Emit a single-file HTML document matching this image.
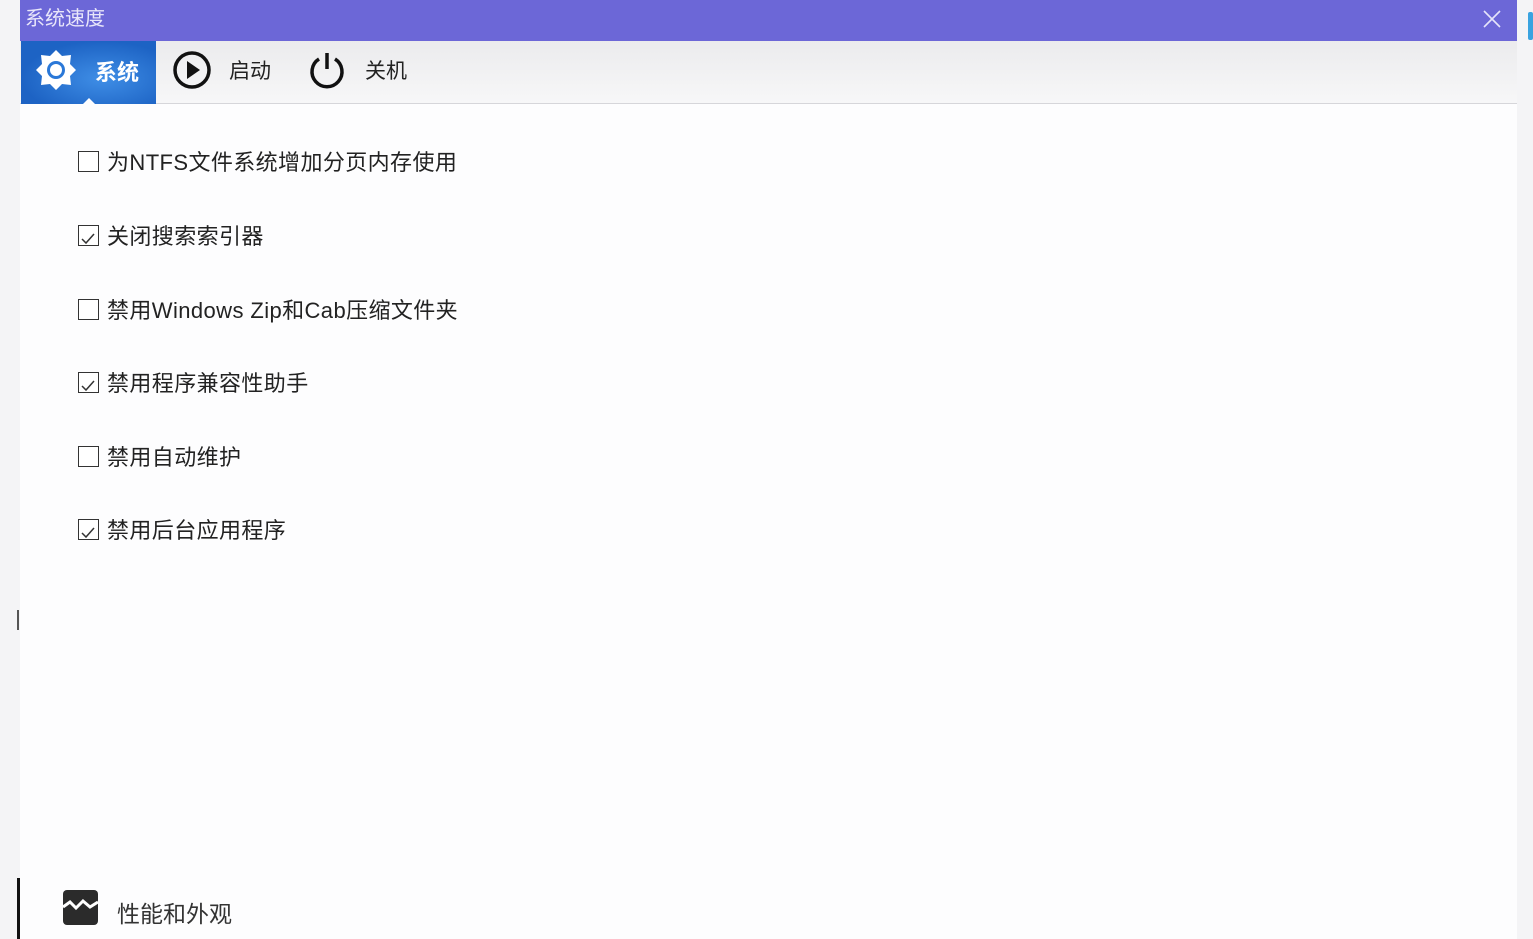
<!DOCTYPE html>
<html><head><meta charset="utf-8"><style>
*{margin:0;padding:0;box-sizing:border-box}
body{width:1533px;height:939px;overflow:hidden;background:#f4f4f6;font-family:"Liberation Sans","Noto Sans CJK SC",sans-serif;position:relative}
.win{position:absolute;left:20px;top:0;width:1497px;height:939px;background:#fdfdfe}
.title{height:41px;background:#6c67d7;color:#e8e6fa;font-size:20px;line-height:38px;padding-left:5px}
.close{position:absolute;right:16px;top:10px}
.tabs{position:absolute;top:41px;left:0;right:0;height:63px;background:linear-gradient(#ebebed,#f7f7f8);border-bottom:1px solid #d6d6da}
.tab1{position:absolute;left:1px;top:0;width:135px;height:63px;background:radial-gradient(ellipse at 60% 60%,#3f8ee6,#1d63c4 70%);color:#fff;font-weight:bold;font-size:22px}
.tab1 span{position:absolute;left:74px;top:14px}
.notch{position:absolute;left:62px;bottom:0;width:0;height:0;border-left:6px solid transparent;border-right:6px solid transparent;border-bottom:6px solid #fdfdfe}
.t{position:absolute;top:14px;font-size:21px;color:#222}
.row{position:absolute;left:58px;font-size:22px;letter-spacing:0.4px;color:#222;height:30px;line-height:30px}
.cb{position:absolute;left:0;top:3px;width:21px;height:21px;border:1.5px solid #333;background:#fff}
.row span{position:absolute;left:29px;white-space:nowrap}
</style></head><body>
<div style="position:absolute;left:17px;top:610px;width:2px;height:20px;background:#555"></div>
<div style="position:absolute;left:17px;top:878px;width:3px;height:61px;background:#111"></div>
<div style="position:absolute;left:1528px;top:12px;width:5px;height:28px;background:#3aa3e0;border-radius:2px"></div>
<div class="win">
<div class="title">系统速度
<svg class="close" width="18" height="18" viewBox="0 0 18 18"><path d="M1 1L17 17M17 1L1 17" stroke="#e6e4fa" stroke-width="1.6"/></svg></div>
<div class="tabs">
<div class="tab1">
<svg style="position:absolute;left:14px;top:8px" width="42" height="42" viewBox="0 0 42 42"><polygon points="21,1 27,7 36,6 35,15 41,21 35,27 36,36 27,35 21,41 15,35 6,36 7,27 1,21 7,15 6,6 15,7" fill="#fff"/><circle cx="21" cy="21" r="9" fill="#2a78d8"/><circle cx="21" cy="21" r="6" fill="#fff"/></svg>
<span>系统</span><div class="notch"></div></div>
<svg style="position:absolute;left:152px;top:9px" width="40" height="40" viewBox="0 0 40 40"><circle cx="20" cy="20" r="17" fill="none" stroke="#111" stroke-width="3.5"/><polygon points="15,11 28,20 15,29" fill="#111"/></svg>
<div class="t" style="left:209px">启动</div>
<svg style="position:absolute;left:287px;top:9px" width="40" height="40" viewBox="0 0 40 40"><path d="M12 9A15 15 0 1 0 28 9" fill="none" stroke="#111" stroke-width="3.5"/><path d="M20 3V19" stroke="#111" stroke-width="3.5"/></svg>
<div class="t" style="left:345px">关机</div>
</div>
<div class="row" style="top:148px"><div class="cb"></div><span>为NTFS文件系统增加分页内存使用</span></div>
<div class="row" style="top:222px"><div class="cb"><svg width="18" height="18" viewBox="0 0 18 18"><path d="M3 9L7 13L15 4" fill="none" stroke="#333" stroke-width="1.5"/></svg></div><span>关闭搜索索引器</span></div>
<div class="row" style="top:296px"><div class="cb"></div><span>禁用Windows Zip和Cab压缩文件夹</span></div>
<div class="row" style="top:369px"><div class="cb"><svg width="18" height="18" viewBox="0 0 18 18"><path d="M3 9L7 13L15 4" fill="none" stroke="#333" stroke-width="1.5"/></svg></div><span>禁用程序兼容性助手</span></div>
<div class="row" style="top:443px"><div class="cb"></div><span>禁用自动维护</span></div>
<div class="row" style="top:516px"><div class="cb"><svg width="18" height="18" viewBox="0 0 18 18"><path d="M3 9L7 13L15 4" fill="none" stroke="#333" stroke-width="1.5"/></svg></div><span>禁用后台应用程序</span></div>
<svg style="position:absolute;left:43px;top:890px" width="35" height="35" viewBox="0 0 35 35"><rect width="35" height="35" rx="4" fill="#2b2b2b"/><path d="M0 17L7 12L13 18L20 11L27 17L35 12" fill="none" stroke="#fff" stroke-width="3"/></svg>
<div style="position:absolute;left:97px;top:895px;font-size:23px;color:#333">性能和外观</div>
</div>
</body></html>
